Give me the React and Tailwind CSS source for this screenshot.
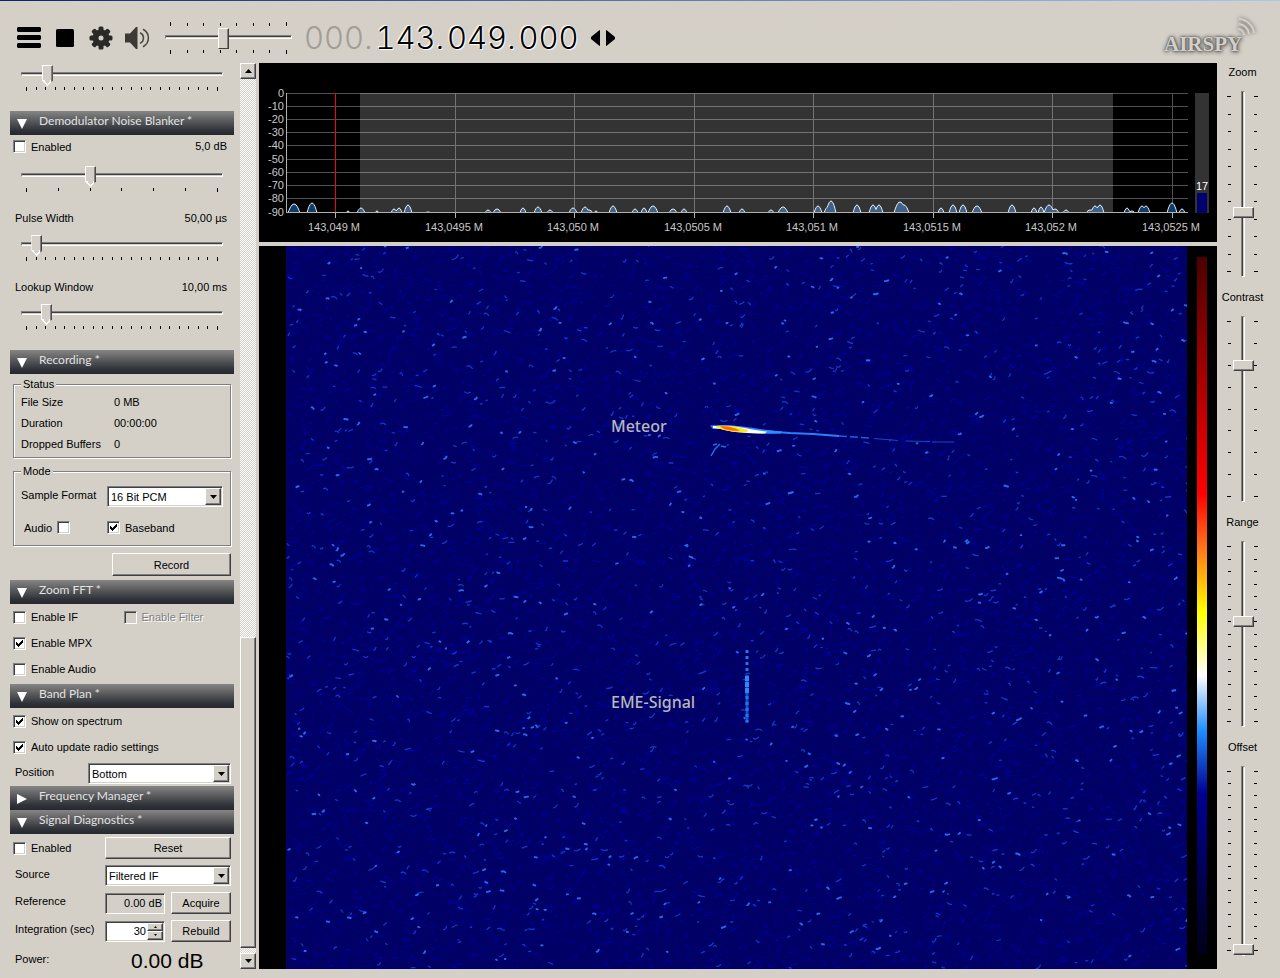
import React, { useState } from "react";

const raised =
  "bg-[#d4d0c8] border border-t-white border-l-white border-b-[#404040] border-r-[#404040] shadow-[inset_-1px_-1px_0_#808080]";
const sunken =
  "border border-t-[#808080] border-l-[#808080] border-b-white border-r-white shadow-[inset_1px_1px_0_#404040,inset_-1px_-1px_0_#d4d0c8]";

// [x, height, half width] of every bump above the noise floor
const peaks = [
  [294, 9, 6], [304, 1, 1], [312, 10, 5], [348, 2, 2], [361, 5, 4], [377, 2, 2],
  [394, 4, 3], [399, 5, 3], [408, 8, 4], [428, 1, 3], [488, 3, 3], [497, 4, 4],
  [523, 5, 3], [538, 6, 4], [550, 3, 3], [573, 5, 4], [585, 6, 4], [589, 3, 4],
  [596, 2, 2], [613, 7, 4], [635, 4, 3], [644, 5, 3], [653, 7, 5], [673, 4, 4],
  [684, 4, 3], [727, 7, 4], [742, 4, 3], [771, 3, 3], [783, 6, 5], [818, 7, 4],
  [828, 6, 4], [831, 12, 5], [857, 8, 4], [873, 8, 4], [879, 8, 4], [900, 11, 6],
  [904, 8, 5], [941, 5, 3], [953, 8, 4], [963, 8, 4], [977, 7, 5], [1012, 8, 4],
  [1034, 5, 3], [1041, 6, 3], [1049, 8, 5], [1055, 4, 4], [1066, 3, 3],
  [1090, 3, 4], [1095, 7, 4], [1100, 8, 4], [1127, 5, 3], [1132, 2, 3],
  [1142, 7, 4], [1146, 7, 4], [1172, 10, 5], [1182, 4, 3],
];

const frequencies = [
  [335, "143,049 M"], [455, "143,0495 M"], [574, "143,050 M"], [694, "143,0505 M"],
  [813, "143,051 M"], [933, "143,0515 M"], [1052, "143,052 M"], [1172, "143,0525 M"],
];

const levels = [
  [93, "0"], [106, "-10"], [119, "-20"], [132, "-30"], [145, "-40"],
  [159, "-50"], [172, "-60"], [185, "-70"], [198, "-80"], [212, "-90"],
];

const spectrumPath = () => {
  let d = "M286 213";
  for (let x = 286; x <= 1188; x++) {
    let h = 0;
    peaks.forEach(([cx, height, half]) => {
      const t = Math.abs(x - cx) / half;
      if (t < 1) h = Math.max(h, height * (1 - t * t));
    });
    d += `L${x} ${(213 - h).toFixed(1)}`;
  }
  return d + "L1188 213Z";
};

const makeNoise = (count, seed, minLength, maxLength, slope) => {
  let s = seed;
  const random = () => {
    s = (s * 1664525 + 1013904223) % 4294967296;
    return s / 4294967296;
  };
  let d = "";
  for (let i = 0; i < count; i++) {
    const x = random() * 901;
    const y = random() * 723;
    const w = minLength + random() * random() * (maxLength - minLength);
    const a = (random() - 0.5) * slope;
    const b = (random() - 0.6) * slope;
    d += `M${x.toFixed(1)} ${y.toFixed(1)}q${(w / 2).toFixed(1)} ${a.toFixed(1)} ${w.toFixed(1)} ${b.toFixed(1)}`;
  }
  return d;
};

const trace = spectrumPath();
const noiseLayers = [
  { d: makeNoise(5200, 7, 2, 12, 8), color: "#000094", width: 1 },
  { d: makeNoise(2600, 21, 2, 9, 8), color: "#0606b4", width: 1 },
  { d: makeNoise(1200, 99, 2, 8, 6), color: "#0c3cc8", width: 1.3 },
  { d: makeNoise(420, 1234, 2, 6, 4), color: "#1e70f0", width: 1.9 },
];

const Slider = ({ label, value, ticks, double, pointed = true }) => {
  const [current, setCurrent] = useState(value);
  const marks = Array.from({ length: ticks });
  return (
    <div className="flex flex-col gap-px">
      {double && (
        <div className="flex justify-between items-end h-1 px-[5px] mb-px">
          {marks.map((_, i) => (
            <span key={i} className="w-px h-[3px] bg-black first:h-1 last:h-1" />
          ))}
        </div>
      )}
      <input
        type="range"
        aria-label={label}
        min="0"
        max="1000"
        value={current}
        onChange={(e) => setCurrent(Number(e.target.value))}
        className={
          "block w-full h-[18px] mb-[3px] appearance-none bg-transparent [&::-webkit-slider-runnable-track]:h-1 [&::-webkit-slider-runnable-track]:border [&::-webkit-slider-runnable-track]:border-t-[#808080] [&::-webkit-slider-runnable-track]:border-l-[#808080] [&::-webkit-slider-runnable-track]:border-b-white [&::-webkit-slider-runnable-track]:border-r-white [&::-webkit-slider-runnable-track]:bg-[linear-gradient(#404040_50%,#d4d0c8_50%)] [&::-webkit-slider-thumb]:appearance-none [&::-webkit-slider-thumb]:w-[11px] [&::-webkit-slider-thumb]:h-[21px] [&::-webkit-slider-thumb]:-mt-2 [&::-webkit-slider-thumb]:bg-[#d4d0c8] [&::-webkit-slider-thumb]:border-t [&::-webkit-slider-thumb]:border-l [&::-webkit-slider-thumb]:border-r [&::-webkit-slider-thumb]:border-t-white [&::-webkit-slider-thumb]:border-l-white [&::-webkit-slider-thumb]:border-r-[#404040] [&::-webkit-slider-thumb]:shadow-[inset_-1px_0_0_#808080] " +
          (pointed
            ? "[&::-webkit-slider-thumb]:[clip-path:polygon(0_0,100%_0,100%_74%,50%_100%,0_74%)] [&::-webkit-slider-thumb]:bg-[linear-gradient(to_top_right,white_62%,transparent_62%),linear-gradient(to_top_left,white_62%,transparent_62%)] [&::-webkit-slider-thumb]:bg-[size:5px_6px] [&::-webkit-slider-thumb]:bg-[position:0_100%,100%_100%] [&::-webkit-slider-thumb]:bg-no-repeat"
            : "[&::-webkit-slider-thumb]:border-b [&::-webkit-slider-thumb]:border-b-[#404040]")
        }
      />
      <div className="flex justify-between h-1 px-[5px]">
        {marks.map((_, i) => (
          <span key={i} className="w-px h-[3px] bg-black first:h-1 last:h-1" />
        ))}
      </div>
    </div>
  );
};

const VerticalTicks = ({ count, align }) => (
  <div className={`flex flex-col justify-between w-1 py-[5px] ${align}`}>
    {Array.from({ length: count }).map((_, i) => (
      <span key={i} className="w-[3px] h-px bg-black first:w-1 last:w-1" />
    ))}
  </div>
);

const VerticalSlider = ({ label, value, ticks, height }) => {
  const [current, setCurrent] = useState(value);
  return (
    <label className="flex flex-col items-center gap-[10px]">
      <span className="h-[18px] leading-[18px]">{label}</span>
      <div className={`flex gap-px ${height}`}>
        <VerticalTicks count={ticks} align="items-end" />
        <input
          type="range"
          min="0"
          max="1000"
          value={current}
          onChange={(e) => setCurrent(Number(e.target.value))}
          className="block w-[21px] h-full appearance-none bg-transparent [writing-mode:vertical-lr] [direction:rtl] [&::-webkit-slider-runnable-track]:w-1 [&::-webkit-slider-runnable-track]:border [&::-webkit-slider-runnable-track]:border-t-[#808080] [&::-webkit-slider-runnable-track]:border-l-[#808080] [&::-webkit-slider-runnable-track]:border-b-white [&::-webkit-slider-runnable-track]:border-r-white [&::-webkit-slider-runnable-track]:bg-[linear-gradient(to_right,#404040_50%,#d4d0c8_50%)] [&::-webkit-slider-thumb]:appearance-none [&::-webkit-slider-thumb]:w-[21px] [&::-webkit-slider-thumb]:h-[11px] [&::-webkit-slider-thumb]:-ml-[9px] [&::-webkit-slider-thumb]:bg-[#d4d0c8] [&::-webkit-slider-thumb]:border [&::-webkit-slider-thumb]:border-t-white [&::-webkit-slider-thumb]:border-l-white [&::-webkit-slider-thumb]:border-b-[#404040] [&::-webkit-slider-thumb]:border-r-[#404040] [&::-webkit-slider-thumb]:shadow-[inset_-1px_-1px_0_#808080]"
        />
        <VerticalTicks count={ticks} align="items-start" />
      </div>
    </label>
  );
};

const Checkbox = ({ label, checked = false, disabled = false, before = false }) => (
  <label className={`flex items-center gap-[5px] ${before ? "flex-row-reverse" : ""}`}>
    <span className="relative block w-[13px] h-[13px]">
      <input
        type="checkbox"
        defaultChecked={checked}
        disabled={disabled}
        className={`peer block w-[13px] h-[13px] appearance-none bg-white disabled:bg-[#d4d0c8] ${sunken}`}
      />
      <svg
        viewBox="0 0 13 13"
        className="absolute inset-0 hidden pointer-events-none peer-checked:block"
        shapeRendering="crispEdges"
      >
        <path d="M3 5h1v1h1v1h1v-1h1v-1h1v-1h1v-1h1v3h-1v1h-1v1h-1v1h-1v1h-1v-1h-1v-1h-1z" />
      </svg>
    </span>
    <span className={disabled ? "text-[#808080] [text-shadow:1px_1px_0_#fff]" : ""}>{label}</span>
  </label>
);

const Select = ({ id, options, className }) => (
  <div className={`relative h-[21px] ${className}`}>
    <select id={id} className={`block w-full h-full pl-[3px] appearance-none bg-white ${sunken}`}>
      {options.map((option) => (
        <option key={option}>{option}</option>
      ))}
    </select>
    <span
      className={`absolute top-[2px] right-[2px] bottom-[2px] flex items-center justify-center w-4 pointer-events-none ${raised}`}
    >
      <svg width="7" height="4" viewBox="0 0 7 4">
        <path d="M0 0h7L3.5 4z" />
      </svg>
    </span>
  </div>
);

const Button = ({ children, className }) => (
  <button type="button" className={`${raised} ${className}`}>
    {children}
  </button>
);

const SectionHeader = ({ title, open = true }) => (
  <button
    type="button"
    aria-expanded={open}
    className="flex items-center w-full h-6 pl-[7px] gap-3 text-[#e2e2e2] bg-[linear-gradient(#868686,#5a5b5d_40%,#2f3339_80%,#25292e)]"
  >
    <svg width="10" height="10" viewBox="0 0 10 10" fill="#fff" className="mt-[2px]">
      <path d={open ? "M0 0h10L5 10z" : "M0 0l10 5L0 10z"} />
    </svg>
    <span className="pb-1 font-['Lato',sans-serif] text-[12px] leading-4">{title}</span>
  </button>
);

const Fieldset = ({ title, children, className }) => (
  <fieldset
    className={`mx-[3px] px-[7px] border border-[#808080] shadow-[1px_1px_0_#fff,inset_1px_1px_0_#fff] ${className}`}
  >
    <legend className="px-[2px] leading-3 bg-[#d4d0c8]">{title}</legend>
    {children}
  </fieldset>
);

const LabeledSlider = ({ label, value, position }) => (
  <div className="mt-[15px]">
    <div className="flex items-center justify-between h-[23px] pb-[2px] pl-[5px] pr-[7px]">
      <span>{label}</span>
      <span>{value}</span>
    </div>
    <div className="mt-[5px] mx-[11px]">
      <Slider label={label} value={position} ticks={21} />
    </div>
  </div>
);

const Sidebar = () => (
  <aside className="w-60 pt-[2px] pl-[10px] pr-[6px] shrink-0">
    <div className="mx-[11px]">
      <Slider label="Threshold" value={105} ticks={21} />
    </div>

    <section className="mt-5">
      <SectionHeader title="Demodulator Noise Blanker *" />
      <div className="flex items-center justify-between h-[23px] pl-[3px] pr-[7px]">
        <Checkbox label="Enabled" />
        <span className="pb-[2px]">5,0 dB</span>
      </div>
      <div className="mt-2 mx-[11px]">
        <Slider label="Noise blanker threshold" value={333} ticks={7} />
      </div>
      <LabeledSlider label="Pulse Width" value="50,00 µs" position={50} />
      <LabeledSlider label="Lookup Window" value="10,00 ms" position={100} />
    </section>

    <section className="mt-5">
      <SectionHeader title="Recording *" />
      <Fieldset title="Status" className="mt-1 h-20">
        <dl className="grid grid-cols-[93px_1fr] leading-[21px] mt-[2px]">
          <dt>File Size</dt>
          <dd>0 MB</dd>
          <dt>Duration</dt>
          <dd>00:00:00</dd>
          <dt>Dropped Buffers</dt>
          <dd>0</dd>
        </dl>
      </Fieldset>
      <Fieldset title="Mode" className="mt-[7px] pb-[9px]">
        <div className="flex items-center mt-[9px]">
          <label htmlFor="format" className="w-[86px] pb-1">
            Sample Format
          </label>
          <Select id="format" options={["16 Bit PCM", "8 Bit PCM", "32 Bit IEEE Float"]} className="flex-1" />
        </div>
        <div className="flex items-center h-[17px] mt-3">
          <div className="w-[86px] pl-[3px]">
            <div className="flex">
              <Checkbox label="Audio" before />
            </div>
          </div>
          <Checkbox label="Baseband" checked />
        </div>
      </Fieldset>
      <div className="flex justify-end mt-[7px] pr-[3px]">
        <Button className="w-[119px] h-[23px]">Record</Button>
      </div>
    </section>

    <section className="mt-1">
      <SectionHeader title="Zoom FFT *" />
      <div className="grid grid-cols-2 auto-rows-[26px] items-center pl-[3px]">
        <Checkbox label="Enable IF" />
        <Checkbox label="Enable Filter" disabled />
        <div className="col-span-2">
          <Checkbox label="Enable MPX" checked />
        </div>
        <div className="col-span-2">
          <Checkbox label="Enable Audio" />
        </div>
      </div>
    </section>

    <section className="mt-[2px]">
      <SectionHeader title="Band Plan *" />
      <div className="grid auto-rows-[26px] items-center pl-[3px]">
        <Checkbox label="Show on spectrum" checked />
        <Checkbox label="Auto update radio settings" checked />
      </div>
      <div className="flex items-center mt-[3px] pl-[5px] pr-[3px]">
        <label htmlFor="position" className="w-[73px] pb-1">
          Position
        </label>
        <Select id="position" options={["Bottom", "Top", "Full"]} className="flex-1" />
      </div>
    </section>

    <section className="mt-[2px]">
      <SectionHeader title="Frequency Manager *" open={false} />
    </section>

    <section>
      <SectionHeader title="Signal Diagnostics *" />
      <div className="flex flex-col gap-[6px] mt-[3px] pl-[5px] pr-[3px]">
        <div className="flex items-center justify-between -ml-[2px]">
          <Checkbox label="Enabled" />
          <Button className="w-[126px] h-[22px]">Reset</Button>
        </div>
        <div className="flex items-center">
          <label htmlFor="source" className="w-[90px] pb-1">
            Source
          </label>
          <Select id="source" options={["Filtered IF", "Baseband", "Audio"]} className="flex-1" />
        </div>
        <div className="flex items-center">
          <label htmlFor="reference" className="w-[90px] pb-1">
            Reference
          </label>
          <input
            id="reference"
            readOnly
            defaultValue="0.00 dB"
            className={`w-[60px] h-[21px] pr-[2px] text-right bg-[#d4d0c8] ${sunken}`}
          />
          <Button className="w-[60px] h-[22px] ml-[6px]">Acquire</Button>
        </div>
        <div className="flex items-center">
          <label htmlFor="integration" className="w-[90px] pb-1">
            Integration (sec)
          </label>
          <div className={`flex w-[60px] h-[21px] p-px bg-white ${sunken}`}>
            <input
              id="integration"
              type="number"
              defaultValue="30"
              className="w-full min-w-0 pr-px text-right bg-transparent [appearance:textfield] [&::-webkit-inner-spin-button]:hidden"
            />
            <div className="flex flex-col w-4 shrink-0">
              <button type="button" aria-label="Increase" className={`flex flex-1 items-center justify-center ${raised}`}>
                <svg width="3" height="2" viewBox="0 0 3 2">
                  <path d="M1.5 0L3 2H0z" />
                </svg>
              </button>
              <button type="button" aria-label="Decrease" className={`flex flex-1 items-center justify-center ${raised}`}>
                <svg width="3" height="2" viewBox="0 0 3 2">
                  <path d="M0 0h3L1.5 2z" />
                </svg>
              </button>
            </div>
          </div>
          <Button className="w-[60px] h-[22px] ml-[6px]">Rebuild</Button>
        </div>
        <div className="flex items-center h-[21px]">
          <span className="w-[116px]">Power:</span>
          <output className="pt-1 text-[21px] leading-[21px]">0.00 dB</output>
        </div>
      </div>
    </section>
  </aside>
);

const ScrollBar = () => (
  <div className="flex flex-col w-4 shrink-0 bg-[repeating-conic-gradient(#fff_0_25%,#d4d0c8_0_50%)] bg-[length:2px_2px]">
    <button type="button" aria-label="Scroll up" className={`flex items-center justify-center h-4 ${raised}`}>
      <svg width="7" height="4" viewBox="0 0 7 4">
        <path d="M3.5 0L7 4H0z" />
      </svg>
    </button>
    <div className="flex-1" />
    <div className={`h-[311px] ${raised}`} />
    <div className="h-[5px]" />
    <button type="button" aria-label="Scroll down" className={`flex items-center justify-center h-4 ${raised}`}>
      <svg width="7" height="4" viewBox="0 0 7 4">
        <path d="M0 0h7L3.5 4z" />
      </svg>
    </button>
  </div>
);

const Spectrum = () => (
  <svg viewBox="259 63 958 179" className="block w-full bg-black text-[11px]">
    <g shapeRendering="crispEdges" fill="none" stroke="#505050">
      {levels.map(([y]) => (
        <path key={y} d={`M287 ${y}.5H1188`} />
      ))}
      {frequencies.map(([x]) => (
        <path key={x} d={`M${x}.5 93V212`} stroke={x === 335 ? "#e01010" : "#505050"} />
      ))}
    </g>
    <path d={trace} fill="#0f3d6b" stroke="#e8eef4" strokeWidth="1" />
    <rect x="360" y="93" width="753" height="119" fill="#fff" fillOpacity="0.2" />
    <g shapeRendering="crispEdges">
      <rect x="286" y="213" width="903" height="2" fill="#000" />
      <path d="M286.5 93V212.5H1188" fill="none" stroke="#b0b0b0" />
      {frequencies.map(([x]) => (
        <path key={x} d={`M${x}.5 212V218`} stroke="#b0b0b0" />
      ))}
      <rect x="1195" y="93" width="14" height="120" fill="#333" />
      <rect x="1197" y="193" width="10" height="20" fill="#00006e" />
    </g>
    <g fill="#c8c8c8">
      {levels.map(([y, text]) => (
        <text key={y} x="284" y={y + 4} textAnchor="end">
          {text}
        </text>
      ))}
      {frequencies.map(([x, text]) => (
        <text key={x} x={x - 1} y="231" textAnchor="middle">
          {text}
        </text>
      ))}
      <text x="1202" y="190" textAnchor="middle" fill="#fff">
        17
      </text>
    </g>
  </svg>
);

const Waterfall = () => (
  <div className="flex flex-1 min-h-0 pl-[27px] pr-[10px] gap-[10px] bg-black">
    <div className="relative flex-1 bg-[#000066]">
      <svg
        viewBox="0 0 901 723"
        preserveAspectRatio="xMinYMin slice"
        className="absolute inset-0 w-full h-full font-['Noto_Sans',sans-serif] font-medium text-[16px]"
      >
        <defs>
          <filter id="soft" filterUnits="userSpaceOnUse" x="0" y="0" width="901" height="723">
            <feGaussianBlur stdDeviation="0.5" />
          </filter>
        </defs>
        <g fill="none" filter="url(#soft)">
          {noiseLayers.map((layer) => (
            <path key={layer.color} d={layer.d} stroke={layer.color} strokeWidth={layer.width} />
          ))}
        </g>

        {/* meteor head echo with its fading trail */}
        <g filter="url(#soft)">
          <path d="M482 185.500l22 1.500 23 1 26 2" fill="none" stroke="#2a80f8" strokeWidth="2" />
          <path d="M553 190l31 2" stroke="#1a60e0" strokeWidth="1.500" strokeDasharray="8 3" />
          <path d="M588 192.500l24 2M620 195l24 .5M646 196l22 0" fill="none" stroke="#1646c8" />
          <path d="M424 179.500l14-.5c16 0 30 4 58 6.500l-1 2c-20 1-46-1-60-4.500l-8 0z" fill="#2a90ff" />
          <path d="M427 180h12c14 0 26 4 42 5.500l-2 2c-16 0-32-1-44-4.500l-8-1z" fill="#fffff4" />
        </g>
        <path d="M430 180c10-1 20 0 32 4l-1 2c-8 1-24-1-31-5z" fill="#ffe620" />
        <path d="M434 180.500c7-1 14 1 20 4-6 1-15 0-20-4z" fill="#ff6a08" />
        <path d="M425 210l4-7 5-5M431 198l-4 1M440 201l-5-1" fill="none" stroke="#1e6ee6" strokeWidth="1.500" />

        {/* moon bounce */}
        <g fill="none" filter="url(#soft)">
          <path d="M461 429v48" stroke="#1650d0" strokeWidth="3" />
          <path d="M461 430v18" stroke="#2a88f8" strokeWidth="4" strokeDasharray="5 1" />
          <path d="M461 404v24M461 450v26" stroke="#2474ec" strokeWidth="3" strokeDasharray="3 3" />
        </g>
        <g fill="#b8b8b8">
          <text x="325" y="186">
            Meteor
          </text>
          <text x="325" y="462">
            EME-Signal
          </text>
        </g>
      </svg>
    </div>
    <div className="w-[10px] mt-[11px] mb-[15px] bg-[linear-gradient(#4b0000,#ff0000_34%,#ff6a1a_41%,#ffff00_51%,#ffffff_60%,#1e8cff_68%,#000090_77%,#000018)]" />
  </div>
);

const Toolbar = () => (
  <header className="flex items-center h-[62px] pl-[17px] pr-6 pt-3">
    <button type="button" aria-label="Menu">
      <svg width="24" height="22" viewBox="0 0 24 22">
        <path d="M1 0h22l1 1v3l-1 1H1L0 4V1zM1 8h22l1 1v3l-1 1H1l-1-1V9zM1 16h22l1 1v3l-1 1H1l-1-1v-3z" />
      </svg>
    </button>
    <button type="button" aria-label="Stop" className="ml-[15px]">
      <svg width="18" height="18" viewBox="0 0 18 18">
        <rect width="18" height="18" rx="1.500" />
      </svg>
    </button>
    <button type="button" aria-label="Configure" className="ml-[15px]">
      <svg width="24" height="24" viewBox="0 0 24 24" fill="#2b2926">
        <g>
          {[0, 45, 90, 135].map((angle) => (
            <rect key={angle} x="9.500" y="0.500" width="5" height="23" rx="1.500" transform={`rotate(${angle} 12 12)`} />
          ))}
          <circle cx="12" cy="12" r="8.500" />
          <circle cx="12" cy="12" r="2.500" fill="#d4d0c8" />
        </g>
      </svg>
    </button>
    <button type="button" aria-label="Mute" className="ml-3">
      <svg width="26" height="22" viewBox="0 0 26 22" fill="#3c3a37">
        <path d="M0 6.500h5L11 0h1.500v22H11l-6-6.500H0z" />
        <g fill="none" stroke="#4c4a47" strokeWidth="1.500" strokeLinecap="round">
          <path d="M15.500 6c4 2 4 8 0 10" />
          <path d="M18.500 2.500c6.500 4 6.500 13 0 17" />
        </g>
      </svg>
    </button>
    <div className="w-[127px] ml-[14px]">
      <Slider label="Volume" value={457} ticks={8} double pointed={false} />
    </div>
    <div className="flex gap-[3px] ml-3 font-['Inter',sans-serif] font-light text-[31px] leading-9 tabular-nums">
      <span className="text-[#a19e97]">000.</span>
      <span className="[text-shadow:1px_1px_1px_#fff,-1px_-1px_1px_#fff]">143.</span>
      <span className="[text-shadow:1px_1px_1px_#fff,-1px_-1px_1px_#fff]">049.</span>
      <span className="[text-shadow:1px_1px_1px_#fff,-1px_-1px_1px_#fff]">000</span>
    </div>
    <button type="button" aria-label="Tuning mode" className="ml-3">
      <svg width="24" height="16" viewBox="0 0 24 16">
        <path d="M9 0v16L8 15.500 0 9V7L8 .5zM15 0v16l1-.5L24 9V7L16 .5z" />
      </svg>
    </button>
    <a
      href="#airspy"
      className="relative flex ml-auto pt-3 w-[92px] font-['Liberation_Serif',serif] font-bold text-[21px] leading-6 text-[#d4d0c8] [text-shadow:0_0_2px_#444,0_0_4px_#666,1px_1px_4px_#666]"
    >
      AIRSPY
      <svg width="24" height="24" viewBox="0 0 24 24" fill="none" className="absolute right-0 -top-1 drop-shadow-[0_0_2px_#555]">
        <g stroke="#d4d0c8" strokeWidth="2">
          <path d="M6 13a6 6 0 016 6M7 8a11 11 0 0110 10M7 3a16 16 0 0115 14" />
        </g>
      </svg>
    </a>
  </header>
);

const App = () => {
  return (
    <div className="flex flex-col min-h-screen pb-[9px] bg-[#d4d0c8] text-black text-[11px] leading-[14px] font-['Liberation_Sans',Arial,sans-serif]">
      <div className="h-px bg-[linear-gradient(to_right,#0a246a,#a6caf0)]" />
      <Toolbar />
      <main className="flex flex-1">
        <Sidebar />
        <ScrollBar />
        <div className="flex flex-col flex-1 gap-1 ml-[3px]">
          <Spectrum />
          <Waterfall />
        </div>
        <div className="flex flex-col w-[63px] pr-3 gap-[11px] shrink-0">
          <VerticalSlider label="Zoom" value={337} ticks={11} height="h-[186px]" />
          <VerticalSlider label="Contrast" value={749} ticks={9} height="h-[186px]" />
          <VerticalSlider label="Range" value={570} ticks={15} height="h-[186px]" />
          <VerticalSlider label="Offset" value={0} ticks={16} height="h-[190px]" />
        </div>
      </main>
    </div>
  );
};

export default App;
